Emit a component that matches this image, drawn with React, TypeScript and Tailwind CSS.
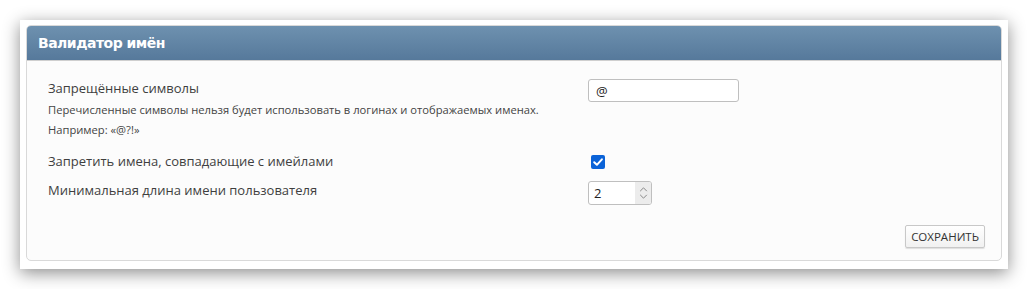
import { useState } from 'react'

export default function App() {
  const [checked, setChecked] = useState(true)

  return (
    <div className="w-[1028px] h-[289px] bg-white pt-[20px] pl-[20px]" style={{ fontFamily: '"Open Sans", "Noto Sans", sans-serif' }}>
      <div className="w-[988px] h-[249px] bg-white p-[5px] pl-[6px] shadow-[0_4px_16px_rgba(0,0,0,0.45)]">
        <div className="h-[236px] w-[976px] flex flex-col rounded-[5px] border border-[#d9d9d9] bg-[#fcfcfc] overflow-hidden">
          <div className="h-[35px] shrink-0 flex items-center px-[11px] bg-gradient-to-b from-[#6e91af] to-[#56799b] border-b border-[#cfcfcf]">
            <h2 className="text-white text-[14px] font-bold tracking-[-0.5px]" style={{ fontFamily: '"DejaVu Sans", Verdana, sans-serif' }}>Валидатор имён</h2>
          </div>
          <div className="flex-1 flex flex-col px-[21px] pt-[18px] text-[#444]">
            <div className="flex">
              <div className="w-[540px]">
                <p className="text-[13px] leading-[18px] text-[#3f3f3f]">Запрещённые символы</p>
                <p className="text-[11.2px] leading-[20px] mt-[3px] text-[#444]">Перечисленные символы нельзя будет использовать в логинах и отображаемых именах.</p>
                <p className="text-[11.2px] leading-[20px] text-[#444]">Например: «@?!»</p>
              </div>
              <input defaultValue="@" className="w-[151px] h-[23px] border border-[#bfbfbf] rounded-[3px] bg-white px-[7px] text-[13px] text-[#222] outline-none" />
            </div>
            <div className="flex items-center mt-[12px]">
              <p className="w-[540px] text-[13px] leading-[18px] text-[#3f3f3f]">Запретить имена, совпадающие с имейлами</p>
              <button onClick={() => setChecked(!checked)} className="ml-[3px] mt-[2px] w-[14px] h-[14px] rounded-[2px] bg-[#0b63d8] flex items-center justify-center">
                {checked && (
                  <svg viewBox="0 0 14 14" className="w-[14px] h-[14px]">
                    <path d="M3.2 7.2 L5.9 9.8 L10.9 4.3" fill="none" stroke="white" strokeWidth="2" strokeLinecap="round" strokeLinejoin="round" />
                  </svg>
                )}
              </button>
            </div>
            <div className="flex items-center mt-[11px]">
              <p className="w-[540px] text-[13px] leading-[18px] text-[#3f3f3f] self-start">Минимальная длина имени пользователя</p>
              <div className="w-[64px] h-[24px] border border-[#bfbfbf] rounded-[3px] bg-white flex overflow-hidden">
                <span className="flex-1 px-[5px] text-[13px] leading-[22px] text-[#222]">2</span>
                <div className="w-[16px] bg-[#ececec] flex flex-col items-center justify-center gap-[2px]">
                  <svg viewBox="0 0 10 6" className="w-[9px] h-[5px]"><path d="M1 5 L5 1 L9 5" fill="none" stroke="#888" strokeWidth="1.2" /></svg>
                  <svg viewBox="0 0 10 6" className="w-[9px] h-[5px]"><path d="M1 1 L5 5 L9 1" fill="none" stroke="#888" strokeWidth="1.2" /></svg>
                </div>
              </div>
            </div>
            <div className="flex justify-end mt-[20px]">
              <button className="mr-[-5px] h-[23px] px-[5px] border border-[#c8c8c8] rounded-[2px] bg-gradient-to-b from-white to-[#f1f1f1] shadow-[0_1px_1px_rgba(0,0,0,0.12)] text-[11.5px] text-[#333]">СОХРАНИТЬ</button>
            </div>
          </div>
        </div>
      </div>
    </div>
  )
}
